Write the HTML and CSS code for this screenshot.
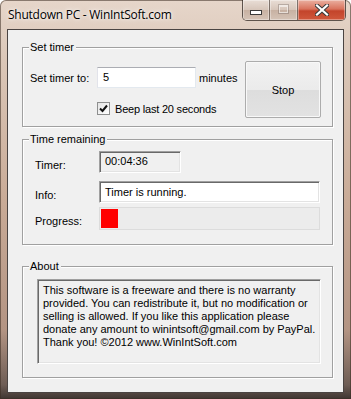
FILE: index.html
```html
<!DOCTYPE html>
<html lang="en">
<head>
  <meta charset="UTF-8">
  <title>Shutdown PC - WinIntSoft.com</title>
  <link rel="stylesheet" href="styles.css">
</head>
<body>
  <div class="window">
    <!-- Title bar -->
    <div class="titlebar">
      <span class="title">Shutdown PC - WinIntSoft.com</span>
      <div class="caption-buttons">
        <span class="cap-btn min-btn"><span class="min-glyph"></span></span>
        <span class="cap-btn max-btn"><span class="max-glyph"></span></span>
        <span class="cap-btn close-btn">
          <svg width="14" height="12" viewBox="0 0 14 12">
            <path d="M2 1.5 L12 10.5 M12 1.5 L2 10.5" stroke="#3a3a3a" stroke-width="4.2" stroke-linecap="square"/>
            <path d="M2 1.5 L12 10.5 M12 1.5 L2 10.5" stroke="#ffffff" stroke-width="2.2" stroke-linecap="square"/>
          </svg>
        </span>
      </div>
    </div>

    <div class="client">
      <!-- Set timer -->
      <div class="group set-timer">
        <span class="group-title">Set timer</span>
        <div class="timer-fields">
          <div class="timer-row">
            <span class="field-label">Set timer to:</span>
            <input type="text" class="minutes-input" value="5">
            <span class="unit">minutes</span>
          </div>
          <div class="beep-row">
            <span class="checkbox">
              <svg width="9" height="9" viewBox="0 0 9 9">
                <path d="M1 4.5 L3.5 7 L8 1.5" stroke="#111" stroke-width="2" fill="none"/>
              </svg>
            </span>
            <span class="beep-text">Beep last 20 seconds</span>
          </div>
        </div>
        <button class="stop-button">Stop</button>
      </div>

      <!-- Time remaining -->
      <div class="group remaining">
        <span class="group-title">Time remaining</span>
        <div class="info-row">
          <span class="info-label">Timer:</span>
          <div class="sunken timer-box">00:04:36</div>
        </div>
        <div class="info-row info-gap">
          <span class="info-label">Info:</span>
          <div class="sunken info-box">Timer is running.</div>
        </div>
        <div class="info-row progress-gap">
          <span class="info-label">Progress:</span>
          <div class="progress-box">
            <div class="progress-fill" style="width: 17px;"></div>
          </div>
        </div>
      </div>

      <!-- About -->
      <div class="group about">
        <span class="group-title">About</span>
        <div class="sunken about-box">
          This software is a freeware and there is no warranty<br>
          provided. You can redistribute it, but no modification or<br>
          selling is allowed. If you like this application please<br>
          donate any amount to winintsoft@gmail.com by PayPal.<br>
          Thank you! ©2012 www.WinIntSoft.com
        </div>
      </div>
    </div>
  </div>
</body>
</html>
```

FILE: styles.css
```css
/* General */
body {
  margin: 0;
  font-family: "Liberation Sans", Arial, sans-serif;
  font-size: 11px;
  color: #000;
  background: #ffffff;
}

.window {
  width: 351px;
  height: 399px;
  box-sizing: border-box;
  padding: 0 7px 0 7px;
  border-radius: 6px 6px 0 0;
  background: linear-gradient(to bottom, #e6d6ca 0px, #dbc7b8 60px, #c9ab97 200px, #b39483 330px, #6e5d55 385px, #3e3531 399px);
  box-shadow: inset 0 0 0 1px rgba(60, 45, 35, 0.55);
  display: flex;
  flex-direction: column;
}

/* Title bar */
.titlebar {
  height: 29px;
  display: flex;
  align-items: flex-start;
  position: relative;
}

.title {
  font-family: "Open Sans", "Noto Sans", sans-serif;
  font-size: 12px;
  line-height: 12px;
  margin-top: 9px;
  margin-left: 1px;
  letter-spacing: -0.25px;
  color: #000;
  text-shadow: 0 0 6px rgba(255, 255, 255, 0.9), 0 0 3px rgba(255, 255, 255, 0.9);
}

.caption-buttons {
  position: absolute;
  top: 0;
  right: -2px;
  display: flex;
  height: 20px;
  border: 1px solid rgba(50, 40, 35, 0.75);
  border-top: none;
  border-radius: 0 0 5px 5px;
  overflow: hidden;
}

.cap-btn {
  display: flex;
  align-items: center;
  justify-content: center;
  box-shadow: inset 0 0 0 1px rgba(255, 255, 255, 0.35);
}

.min-btn {
  width: 26px;
  background: linear-gradient(to bottom, #e9ded6, #d6c5b9 50%, #c7b1a2 51%, #d5c3b6);
  border-right: 1px solid rgba(60, 50, 45, 0.6);
}

.max-btn {
  width: 27px;
  background: linear-gradient(to bottom, #e9ded6, #d6c5b9 50%, #c7b1a2 51%, #d5c3b6);
  border-right: 1px solid rgba(60, 50, 45, 0.6);
}

.close-btn {
  width: 47px;
  background: linear-gradient(to bottom, #eab0a0 0%, #d9735d 45%, #c3442b 55%, #d0583c 100%);
}

.min-glyph {
  width: 10px;
  height: 3px;
  margin-top: 5px;
  background: #fff;
  border: 1px solid #3a3a3a;
}

.max-glyph {
  width: 7px;
  height: 5px;
  margin-bottom: 2px;
  border: 1px solid rgba(255, 255, 255, 0.55);
  border-top-width: 2px;
  box-shadow: 0 0 0 1px rgba(90, 80, 75, 0.3);
}

/* Client area */
.client {
  flex: 1;
  margin-bottom: 6px;
  background: #f0f0f0;
  border: 1px solid #4a4442;
  padding: 17px 11px 0 14px;
  display: flex;
  flex-direction: column;
}

/* Group boxes */
.group {
  position: relative;
  box-sizing: border-box;
  width: 311px;
  border: 1px solid #a0a0a0;
  box-shadow: inset 1px 1px #ffffff, 1px 1px #ffffff;
}

.group-title {
  position: absolute;
  top: -7px;
  left: 6px;
  padding: 0 2px 0 1px;
  background: #f0f0f0;
  line-height: 13px;
}

.set-timer {
  height: 80px;
  display: flex;
  align-items: flex-start;
  padding: 13px 11px 0 7px;
}

.remaining {
  height: 106px;
  margin-top: 12px;
  padding: 11px 0 0 12px;
}

.about {
  height: 112px;
  margin-top: 21px;
  padding: 12px 0 0 14px;
}

/* Set timer */
.timer-fields {
  margin-top: 6px;
}

.timer-row {
  display: flex;
  align-items: center;
}

.field-label {
  width: 67px;
  padding-top: 1px;
}

.minutes-input {
  width: 99px;
  height: 21px;
  box-sizing: border-box;
  margin: 0;
  padding: 0 4px 2px 5px;
  font-family: "Liberation Sans", Arial, sans-serif;
  font-size: 11px;
  border: 1px solid;
  border-color: #abadb3 #e3e9ef #e3e9ef #e2e3ea;
  background: #fff;
  outline: none;
}

.unit {
  margin-left: 3px;
  padding-top: 1px;
}

.beep-row {
  display: flex;
  align-items: center;
  margin-left: 67px;
  margin-top: 14px;
  gap: 5px;
}

.beep-text {
  letter-spacing: -0.2px;
}

.checkbox {
  width: 13px;
  height: 13px;
  box-sizing: border-box;
  border: 1px solid #8e8f8f;
  background: linear-gradient(135deg, #e4e4e4, #ffffff);
  display: flex;
  align-items: center;
  justify-content: center;
}

.stop-button {
  margin-left: auto;
  width: 76px;
  height: 57px;
  font-family: "Liberation Sans", Arial, sans-serif;
  font-size: 11px;
  color: #000;
  border: 1px solid #acacac;
  border-radius: 2px;
  background: linear-gradient(to bottom, #f2f2f2 0%, #ebebeb 50%, #dddddd 51%, #e2e2e2 100%);
  box-shadow: inset 0 0 0 1px #f8f8f8;
  padding: 0;
}

/* Time remaining */
.info-row {
  display: flex;
  align-items: center;
}

.info-gap {
  margin-top: 8px;
}

.progress-gap {
  margin-top: 4px;
}

.info-label {
  width: 64px;
  padding-top: 5px;
}

.sunken {
  box-sizing: border-box;
  border: 1px solid;
  border-color: #a0a0a0 #ffffff #ffffff #a0a0a0;
  box-shadow: inset 1px 1px #696969, inset -1px -1px #e3e3e3;
}

.timer-box {
  width: 82px;
  height: 22px;
  padding: 3px 0 0 5px;
  background: #f0f0f0;
}

.info-box {
  width: 221px;
  height: 22px;
  padding: 4px 0 0 5px;
  background: #ffffff;
}

.progress-box {
  width: 221px;
  height: 23px;
  box-sizing: border-box;
  border: 1px solid #dcdcdc;
  background: #ececec;
  padding: 1px;
}

.progress-fill {
  height: 100%;
  background: #ff0000;
}

/* About */
.about-box {
  width: 284px;
  height: 85px;
  padding: 4px 0 0 5px;
  background: #f0f0f0;
  line-height: 13px;
  white-space: nowrap;
}
```
